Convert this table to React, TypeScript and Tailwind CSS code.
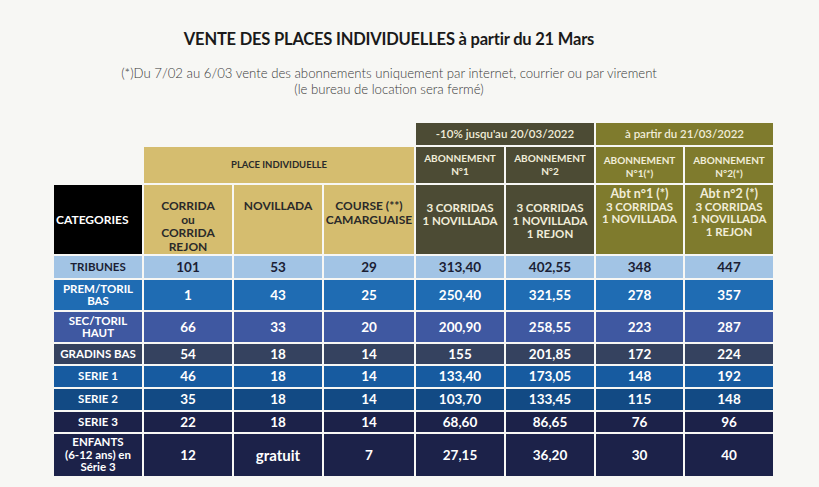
const font = { fontFamily: "Lato, 'Open Sans', sans-serif" };

type Row = {
  label: string[];
  vals: string[];
  cls: string;
};

const rows: Row[] = [
  { label: ["TRIBUNES"], vals: ["101", "53", "29", "313,40", "402,55", "348", "447"], cls: "bg-[#a2c4e5] text-[#1b1e34]" },
  { label: ["PREM/TORIL", "BAS"], vals: ["1", "43", "25", "250,40", "321,55", "278", "357"], cls: "bg-[#1f6cb3] text-white" },
  { label: ["SEC/TORIL", "HAUT"], vals: ["66", "33", "20", "200,90", "258,55", "223", "287"], cls: "bg-[#3f58a1] text-white" },
  { label: ["GRADINS BAS"], vals: ["54", "18", "14", "155", "201,85", "172", "224"], cls: "bg-[#35425f] text-white" },
  { label: ["SERIE 1"], vals: ["46", "18", "14", "133,40", "173,05", "148", "192"], cls: "bg-[#175ba0] text-white" },
  { label: ["SERIE 2"], vals: ["35", "18", "14", "103,70", "133,45", "115", "148"], cls: "bg-[#124a84] text-white" },
  { label: ["SERIE 3"], vals: ["22", "18", "14", "68,60", "86,65", "76", "96"], cls: "bg-[#1c2249] text-white" },
  { label: ["ENFANTS", "(6-12 ans) en", "Série 3"], vals: ["12", "gratuit", "7", "27,15", "36,20", "30", "40"], cls: "bg-[#1c2249] text-white" },
];

const tanCols = [
  ["CORRIDA", "ou", "CORRIDA", "REJON"],
  ["NOVILLADA"],
  ["COURSE (**)", "CAMARGUAISE"],
];

export default function App() {
  return (
    <div className="w-[819px] h-[487px] bg-[#f7f7f4] overflow-hidden" style={font}>
      {/* Heading */}
      <div className="w-[778px] pt-[27px] text-center">
        <h1 className="text-[16.5px] leading-[24px] font-bold text-[#1a1a1a] tracking-[-0.2px]">
          VENTE DES PLACES INDIVIDUELLES à partir du 21 Mars
        </h1>
        <p className="mt-[14px] text-[13.2px] leading-[16px] font-light text-[#3a3a3a]">
          (*)Du 7/02 au 6/03 vente des abonnements uniquement par internet, courrier ou par virement
          <br />
          (le bureau de location sera fermé)
        </p>
      </div>

      {/* Table */}
      <div className="ml-[54px] mt-[26px] w-[719px] grid grid-cols-[88px_88px_88px_90px_88px_88px_87px_88px] grid-rows-[22px_36px_69px_22px_30px_30px_20px_21px_21px_20px_42px] gap-[2px]">
        {/* row 1 */}
        <div className="col-span-4" />
        <div className="col-span-2 bg-[#4c4b34] text-[#f1edd9] text-[11.5px] font-semibold flex items-center justify-center">
          -10% jusqu'au 20/03/2022
        </div>
        <div className="col-span-2 bg-[#7f7b2d] text-[#f1edd9] text-[11.5px] font-semibold flex items-center justify-center">
          à partir du 21/03/2022
        </div>

        {/* row 2 */}
        <div />
        <div className="col-span-3 bg-[#d5bd6f] text-[#2a2a2a] text-[9.5px] font-bold flex items-center justify-center">
          PLACE INDIVIDUELLE
        </div>
        <div className="bg-[#4c4b34] text-[#f1edd9] text-[10px] leading-[13px] font-bold flex flex-col items-center justify-center">
          <span>ABONNEMENT</span>
          <span>N°1</span>
        </div>
        <div className="bg-[#4c4b34] text-[#f1edd9] text-[10px] leading-[13px] font-bold flex flex-col items-center justify-center">
          <span>ABONNEMENT</span>
          <span>N°2</span>
        </div>
        <div className="bg-[#7f7b2d] text-[#f1edd9] text-[10px] leading-[13px] font-bold flex flex-col items-center justify-center pt-[4px]">
          <span>ABONNEMENT</span>
          <span>N°1(*)</span>
        </div>
        <div className="bg-[#7f7b2d] text-[#f1edd9] text-[10px] leading-[13px] font-bold flex flex-col items-center justify-center pt-[4px]">
          <span>ABONNEMENT</span>
          <span>N°2(*)</span>
        </div>

        {/* row 3 */}
        <div className="bg-black text-white text-[12px] font-bold flex items-center pl-[2px]">CATEGORIES</div>
        {tanCols.map((lines, i) => (
          <div key={i} className="bg-[#d5bd6f] text-[#2a2a2a] text-[12px] leading-[13.5px] font-bold flex flex-col items-center pt-[14px]">
            {lines.map((l) => (
              <span key={l}>{l}</span>
            ))}
          </div>
        ))}
        <div className="bg-[#4c4b34] text-[#f1edd9] text-[11.5px] leading-[13px] font-bold flex flex-col items-center pt-[16px]">
          <span>3 CORRIDAS</span>
          <span>1 NOVILLADA</span>
        </div>
        <div className="bg-[#4c4b34] text-[#f1edd9] text-[11.5px] leading-[13px] font-bold flex flex-col items-center pt-[16px]">
          <span>3 CORRIDAS</span>
          <span>1 NOVILLADA</span>
          <span>1 REJON</span>
        </div>
        <div className="bg-[#7f7b2d] text-[#f1edd9] text-[11.5px] leading-[12.5px] font-bold flex flex-col items-center pt-[3px]">
          <span className="text-[12.5px]">Abt n°1 (*)</span>
          <span>3 CORRIDAS</span>
          <span>1 NOVILLADA</span>
        </div>
        <div className="bg-[#7f7b2d] text-[#f1edd9] text-[11.5px] leading-[12.5px] font-bold flex flex-col items-center pt-[3px]">
          <span className="text-[12.5px]">Abt n°2 (*)</span>
          <span>3 CORRIDAS</span>
          <span>1 NOVILLADA</span>
          <span>1 REJON</span>
        </div>

        {/* data rows */}
        {rows.map((r) => (
          <div key={r.label.join("-")} className="contents">
            <div className={`${r.cls} text-[11.5px] leading-[12.5px] font-bold flex flex-col items-center justify-center text-center`}>
              {r.label.map((l) => (
                <span key={l}>{l}</span>
              ))}
            </div>
            {r.vals.map((v, i) => (
              <div
                key={i}
                className={`${r.cls} ${v === "gratuit" ? "text-[15px]" : "text-[13.5px]"} font-bold flex items-center justify-center`}
              >
                {v}
              </div>
            ))}
          </div>
        ))}
      </div>
    </div>
  );
}
